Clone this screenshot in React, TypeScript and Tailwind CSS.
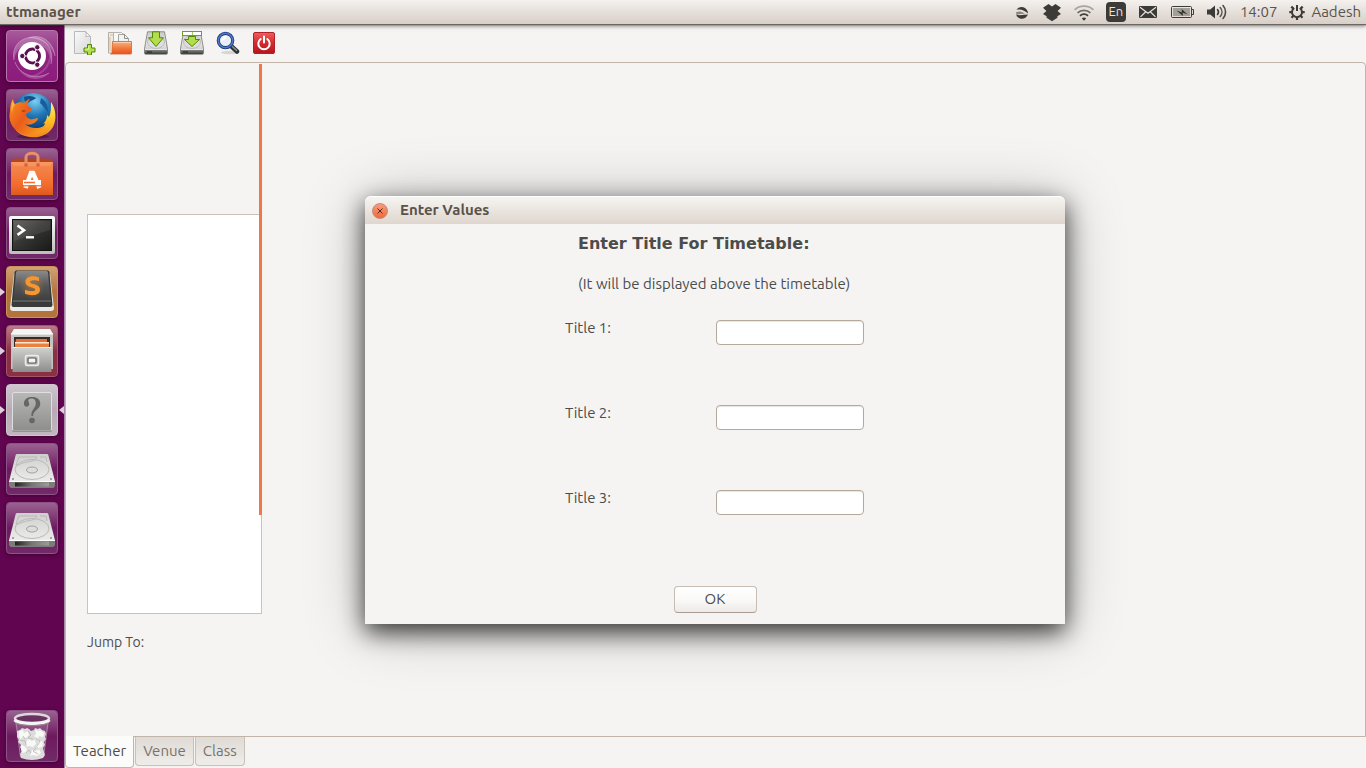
import { useState, type ReactNode } from "react";

/* ---------- top panel indicators ---------- */

const SyncIcon = () => (
  <svg width="16" height="20" viewBox="0 0 16 20">
    <path d="M2.500 8C4 5 8 4 11 6c2 1.500 3 3.500 3 5.500C11 8.500 6 6.500 2.500 8z" fill="#3c3b37" />
    <path d="M2 10.500c3-2 7-1 9 1.500-2-.6-6 .8-8.500.5z" fill="#8a867f" />
    <path d="M2.200 12.500C6 14 10 12.500 14 12.500 12.500 16 9 17.500 6 16.500c-2-.7-3.400-2-3.800-4z" fill="#3c3b37" />
  </svg>
);

const DropboxIcon = () => (
  <svg width="20" height="20" viewBox="0 0 20 20" fill="#3c3b37">
    <path d="M6.500 2 10 4.600 13.500 2 19 5.800 15.600 8.900 19 12l-3.600 2.200v1.600L10 19.200 4.600 15.800v-1.600L1 12l3.400-3.100L1 5.800z" />
  </svg>
);

const WifiIcon = () => (
  <svg width="20" height="20" viewBox="0 0 20 20" fill="none" strokeWidth="1.800">
    <path d="M.6 7.800C5.500 2.800 14.500 2.800 19.400 7.800" stroke="#a8a49e" />
    <path d="M3.600 10.900C7 7.400 13 7.400 16.400 10.900" stroke="#6f6c67" />
    <path d="M6 13.800C8.200 11.600 11.800 11.600 14 13.800" stroke="#3c3b37" />
    <path d="M7.800 16.600a3.200 3.200 0 0 1 4.400 0L10 18.800z" fill="#3c3b37" />
  </svg>
);

const MailIcon = () => (
  <svg width="20" height="20" viewBox="0 0 20 20">
    <rect x="1" y="4" width="18" height="12" rx="1" fill="#3c3b37" />
    <path
      d="m2 5.200 8 6 8-6M2.500 14.800l5-4.800M17.500 14.800l-5-4.800"
      fill="none"
      stroke="#ece7e1"
      strokeWidth="1.100"
    />
  </svg>
);

const BatteryIcon = () => (
  <svg width="24" height="20" viewBox="0 0 24 20">
    <rect x="1.500" y="4.500" width="20" height="11" rx="1" fill="none" stroke="#3c3b37" />
    <path d="M22 7.500h1.500v5H22" fill="none" stroke="#3c3b37" />
    <rect x="3" y="6" width="17" height="8" fill="#a29e99" />
    <path d="M6.500 8.500 12 10.500l-.4-3.500 6 5.500-5-2 .4 3.500z" fill="#2f2e2b" />
  </svg>
);

const VolumeIcon = () => (
  <svg width="22" height="20" viewBox="0 0 22 20">
    <path d="M1 7.500h3.200L9 3.500v13l-4.800-4H1z" fill="#3c3b37" />
    <g fill="none" strokeWidth="1.600" strokeLinecap="round">
      <path d="M11.500 7.500c1.200 1.500 1.200 3.500 0 5" stroke="#3c3b37" />
      <path d="M14.200 5.500c2.300 2.600 2.300 6.400 0 9" stroke="#5b5955" />
      <path d="M17 3.500c3.400 3.700 3.400 9.300 0 13" stroke="#4b4945" />
    </g>
  </svg>
);

const SessionIcon = () => (
  <svg width="16" height="20" viewBox="0 0 16 20" fill="none" stroke="#3c3b37">
    <path d="M5.200 6A5 5 0 1 0 10.800 6" strokeWidth="2" />
    <path d="M8 3v6" strokeWidth="2" />
    <path
      d="M.3 10.200h2.400M13.300 10.200h2.400M8 15.200v2.700M2.500 15.700l1.900-1.900M13.500 15.700l-1.900-1.900M2.300 4.600l1.900 1.900M13.700 4.600l-1.900 1.900"
      strokeWidth="2.200"
    />
  </svg>
);

/* ---------- toolbar icons ---------- */

const NewIcon = () => (
  <svg width="24" height="24" viewBox="0 0 24 24">
    <defs>
      <linearGradient id="paper" x2="1" y2="1">
        <stop stopColor="#fafafa" />
        <stop offset="1" stopColor="#d6d6d6" />
      </linearGradient>
    </defs>
    <path d="M2.500.5h11l5 5v17h-16z" fill="url(#paper)" stroke="#b9b9b7" />
    <path d="M13.500.5c1 2 .8 3.800.2 5.200 2-.6 3.600-.6 4.800 0z" fill="#fff" stroke="#a9a9a7" strokeWidth=".8" />
    <path d="M15.500 13.500h4v3.500h3.500v4h-3.500v3h-4v-3H12v-4h3.500z" fill="#b5dc4c" stroke="#4e8a06" />
    <path d="M16.800 15v3.200H13.300" fill="none" stroke="#e5f7ab" />
  </svg>
);

const OpenIcon = () => (
  <svg width="24" height="24" viewBox="0 0 24 24">
    <defs>
      <linearGradient id="folder" y2="1" x2="0">
        <stop stopColor="#f9b583" />
        <stop offset=".5" stopColor="#f37d42" />
        <stop offset="1" stopColor="#e8521c" />
      </linearGradient>
    </defs>
    <path d="M.5 22V1.500h6l1.500 1.500h8v19z" fill="#ececea" stroke="#b2b0ad" />
    <path d="M2 4h4M2 20V6" stroke="#efb37e" />
    <path d="M5.500 20V1.500h8l4 4V20z" fill="#f8f8f7" stroke="#b5b3b0" />
    <path d="M10.500 18V3.500h6l4 4V18z" fill="#f3f3f2" stroke="#a5a3a0" />
    <path d="M16.500 3v4.500h4" fill="none" stroke="#8f8d8a" />
    <path
      d="M4.500 10.500h19v11.500a1 1 0 0 1-1 1H2.500a1.500 1.500 0 0 0 1.500-1.500z"
      fill="url(#folder)"
      stroke="#d4622b"
      strokeWidth=".8"
    />
    <path d="M5 11.500h18" stroke="#fbd0b1" />
  </svg>
);

const SaveIcon = ({ boxed = false }: { boxed?: boolean }) => (
  <svg width="24" height="24" viewBox="0 0 24 24">
    <defs>
      <linearGradient id="disk" x2="0" y2="1">
        <stop stopColor="#c9c9c9" />
        <stop offset=".5" stopColor="#e8e8e8" />
        <stop offset="1" stopColor="#bfbfbf" />
      </linearGradient>
      <linearGradient id="diskbase" x2="0" y2="1">
        <stop stopColor="#8b8d8a" />
        <stop offset="1" stopColor="#3a3c3a" />
      </linearGradient>
    </defs>
    <path d="M3.500.8h17l3 17v4.500a1 1 0 0 1-1 1h-21a1 1 0 0 1-1-1v-4.500z" fill="url(#disk)" stroke="#8c8e8b" />
    <ellipse cx="12" cy="11" rx="8.500" ry="6.500" fill="#dedede" stroke="#bcbcbc" />
    <path d="M.8 18.500h22.400v3.800a.8.8 0 0 1-.8.800H1.600a.8.8 0 0 1-.8-.8z" fill="url(#diskbase)" />
    <path d="M1 18.500h22" stroke="#e9e9e9" />
    <path d="M3 21h5" stroke="#222" />
    {boxed ? (
      <>
        <rect x="2.500" y=".5" width="19" height="4" fill="#fff" stroke="#6ca21b" />
        <path d="M12.500 1v3" stroke="#a4c96b" />
        <path d="M8.500 5.500h7v3h4L12 15.500 4.500 8.500h4z" fill="#b5dc4c" stroke="#4e8a06" />
      </>
    ) : (
      <path d="M8.500.8h7v6h4L12 15.500 4.500 6.800h4z" fill="#b5dc4c" stroke="#4e8a06" />
    )}
  </svg>
);

const FindIcon = () => (
  <svg width="24" height="24" viewBox="0 0 24 24">
    <ellipse cx="14" cy="21.500" rx="9" ry="1.800" fill="#000" opacity=".12" />
    <path d="m14.500 14.500 6.500 6" stroke="#2e3436" strokeWidth="4.500" strokeLinecap="round" />
    <path d="m15.500 14.800 5 4.600" stroke="#888a85" strokeWidth="1.500" strokeLinecap="round" />
    <circle cx="9.500" cy="9.500" r="7.200" fill="#e9eef6" stroke="#1d3b80" strokeWidth="3.200" />
    <circle cx="9.500" cy="9.500" r="7.200" fill="none" stroke="#5277c3" strokeWidth="1.500" />
    <path d="M5.500 10c0-3 2-5 5.500-5-1 3-3 4-5.500 5z" fill="#fff" />
  </svg>
);

const QuitIcon = () => (
  <svg width="24" height="24" viewBox="0 0 24 24">
    <defs>
      <linearGradient id="quit" x2="0" y2="1">
        <stop stopColor="#ec5f5f" />
        <stop offset=".5" stopColor="#d52a2e" />
        <stop offset="1" stopColor="#b3151f" />
      </linearGradient>
    </defs>
    <rect x="1.500" y="1.500" width="21" height="21" rx="1.500" fill="url(#quit)" stroke="#b3202a" />
    <path
      d="M8.700 8a5.700 5.700 0 1 0 6.600 0M12 5.500v6"
      fill="none"
      stroke="#fff"
      strokeWidth="2"
      strokeLinecap="round"
    />
  </svg>
);

/* ---------- launcher icons ---------- */

const UbuntuIcon = () => (
  <svg width="52" height="52" viewBox="0 0 52 52">
    <g fill="#fff">
      <path d="M8 30C5 14 18 5 31 8c11 3 17 13 14 26 0-13-8-20-18-21-10-1-17 6-19 17z" opacity=".22" />
      <path d="M22 8c14-5 25 4 27 18-3-9-12-18-27-18z" opacity=".22" />
      <path d="M9 32c5 14 22 18 34 11-8 10-28 8-34-11z" opacity=".2" />
      <path d="M44 20c4 16-8 28-24 27 14-2 24-10 24-27z" opacity=".16" />
    </g>
    <g fill="none" stroke="#efd0ea" strokeWidth=".7" opacity=".6">
      <path d="M8 30C5 14 18 5 31 8c11 3 17 13 14 26" />
      <path d="M22 8c14-5 25 4 27 18" />
      <path d="M9 32c5 14 22 18 34 11" />
    </g>
    <circle cx="26" cy="26" r="14" fill="#fff" />
    <circle cx="26.500" cy="26" r="7" fill="none" stroke="#5b1150" strokeWidth="3" />
    <path d="M26.500 26 16 26M26.500 26l5.500 9.500M26.500 26 32 16.500" stroke="#fff" strokeWidth="1" />
    <g fill="#5b1150" stroke="#fff" strokeWidth="1">
      <circle cx="16.300" cy="26" r="2.700" />
      <circle cx="31.300" cy="17.300" r="2.700" />
      <circle cx="31.300" cy="34.700" r="2.700" />
    </g>
    <circle cx="26.500" cy="26" r="5.200" fill="#fff" />
  </svg>
);

const FirefoxIcon = () => (
  <svg width="52" height="52" viewBox="0 0 52 52">
    <defs>
      <radialGradient id="globe" cx=".55" cy=".2" r=".8">
        <stop stopColor="#7fd0f0" />
        <stop offset=".45" stopColor="#2179b8" />
        <stop offset="1" stopColor="#0b2c62" />
      </radialGradient>
      <linearGradient id="fox" x2="1" y2=".7">
        <stop stopColor="#f7941e" />
        <stop offset=".5" stopColor="#ea5b1b" />
        <stop offset="1" stopColor="#f79a1d" />
      </linearGradient>
      <linearGradient id="tail" x2="0" y2="1">
        <stop stopColor="#fff27a" />
        <stop offset=".5" stopColor="#fcc326" />
        <stop offset="1" stopColor="#f2841f" />
      </linearGradient>
    </defs>
    <ellipse cx="27" cy="47.500" rx="16" ry="2" fill="#000" opacity=".3" />
    <circle cx="27" cy="24" r="20" fill="url(#globe)" />
    <path d="M18 8c5-2 9-1 12 1-2 2-5 2-8 5-2 1-4-2-4-6z" fill="#164f8c" />
    <path d="M35 9c6 4 7 8 7 14-3-2-5-7-8-9z" fill="#195d9e" />
    <path
      d="M45 13c5 7 6 17 2 25-6 10-18 12-28 9-4-1-8-4-10-7 9 4 20 4 27-2 1 0 3-2 3-4l-2 1c4-4 4-7 4-9l2 2c2-4 2-9 2-15z"
      fill="url(#tail)"
    />
    <path
      d="M7 10c0 2 1 4 2 5 3-2 7-2 9-1 2-2 4-4 6-4-2 3-3 5-3 7 3 1 5 1 5 3-1 3-5 3-6 6 0 2 2 3 4 4 3 1 5-1 8-1-1 5-8 8-13 6 5 5 13 5 20 2-4 8-16 12-25 7C5 39 2 30 4 22c0-5 1-9 3-12z"
      fill="url(#fox)"
    />
    <path d="M15 22c2-1 4-1 5 0-2 1-3 1-5 0z" fill="#a6330e" />
    <path d="M7 10c0 3 1 5 2 6-2 2-3 5-3 9-1-5-1-11 1-15z" fill="#fbb141" />
  </svg>
);

const SoftwareIcon = () => (
  <svg width="52" height="52" viewBox="0 0 52 52">
    <defs>
      <linearGradient id="bag" x2="0" y2="1">
        <stop stopColor="#f58a52" />
        <stop offset=".7" stopColor="#f26c2c" />
        <stop offset="1" stopColor="#dc5a1e" />
      </linearGradient>
    </defs>
    <path d="M8 10.500h36l3 3.500H5z" fill="#b8451a" />
    <path d="M5 14h42v33H5z" fill="url(#bag)" />
    <path d="M5 14h42l-3 4H8z" fill="#fff" opacity=".12" />
    <path d="M20 17V9c0-5 12-5 12 0v8" fill="none" stroke="#e99069" strokeWidth="3" />
    <circle cx="20" cy="17" r="1.800" fill="#d9632f" />
    <circle cx="32" cy="17" r="1.800" fill="#d9632f" />
    <g fill="none" stroke="#fff">
      <path d="M19.500 40 25 25h2l6.500 15" strokeWidth="4.500" />
      <path d="M17 34.500h18" strokeWidth="5" />
      <path d="M18 34.500h11" stroke="#f26c2c" strokeWidth="1.500" />
    </g>
    <path d="M16 37.800h20" stroke="#f26c2c" strokeWidth="1.200" />
  </svg>
);

const TerminalIcon = () => (
  <svg width="52" height="52" viewBox="0 0 52 52">
    <defs>
      <linearGradient id="term" x2="1" y2="1">
        <stop stopColor="#5b5b59" />
        <stop offset=".5" stopColor="#333331" />
        <stop offset="1" stopColor="#191917" />
      </linearGradient>
      <linearGradient id="bezel" x2="0" y2="1">
        <stop stopColor="#fdfdfd" />
        <stop offset="1" stopColor="#bdbdbb" />
      </linearGradient>
    </defs>
    <rect x="3" y="9" width="46" height="38" rx="2" fill="url(#bezel)" />
    <rect x="6.500" y="12.500" width="39" height="31" fill="url(#term)" stroke="#111" />
    <path d="M8 14h36v9L8 34z" fill="#fff" opacity=".08" />
    <path d="m11.500 18.500 6.500 4.700-6.500 4.700" fill="none" stroke="#fff" strokeWidth="2.600" />
    <path d="M20 30.300h8" stroke="#fff" strokeWidth="2.400" />
  </svg>
);

const SublimeIcon = () => (
  <svg width="52" height="52" viewBox="0 0 52 52">
    <defs>
      <linearGradient id="key" x2="0" y2="1">
        <stop stopColor="#8a8a8a" />
        <stop offset=".5" stopColor="#565656" />
        <stop offset="1" stopColor="#3f3f3f" />
      </linearGradient>
      <radialGradient id="glow">
        <stop stopColor="#f9a13c" stopOpacity=".35" />
        <stop offset="1" stopColor="#f9a13c" stopOpacity="0" />
      </radialGradient>
    </defs>
    <path d="M8 8h36l4 34c0 2-1 3-3 3H7c-2 0-3-1-3-3z" fill="#e9e9e7" />
    <path d="M6 40h40" stroke="#bdbdbb" />
    <path d="M8.500 7c0-2 1-2.500 3-2.500h29c2 0 3 .5 3 2.500l3 32c0 1-1 2-2 2h-37c-1 0-2-1-2-2z" fill="#3a3a3a" />
    <path d="M10 6.500c0-1 1-1.500 2-1.500h28c1 0 2 .5 2 1.500L44.500 34h-37z" fill="url(#key)" />
    <path d="M7 35h38" stroke="#7a7a7a" />
    <circle cx="26" cy="20" r="13" fill="url(#glow)" />
    <path
      d="M33 11.500v3.800c-3-1.300-8.500-1.600-9 .7-.4 2.500 10.500 1.500 10 8-.5 6.200-9.500 6-15 3.700v-4c4 1.600 10 2 10.300 0 .4-2.900-10.300-1.700-9.900-8 .4-6.200 8.600-6.200 13.600-4.200z"
      fill="#f7952f"
    />
  </svg>
);

const FilesIcon = () => (
  <svg width="52" height="52" viewBox="0 0 52 52">
    <defs>
      <linearGradient id="drawer" x2="0" y2="1">
        <stop stopColor="#d2d2d0" />
        <stop offset="1" stopColor="#8d8d8b" />
      </linearGradient>
    </defs>
    <path d="M8 4h36l3 5v35H5V9z" fill="#c4c4c2" />
    <path d="M8 4h36l3 5H5z" fill="#f4f4f3" />
    <path d="M5 9h42" stroke="#fff" />
    <rect x="8" y="12" width="36" height="11" fill="#3c2a22" />
    <path d="M10 14h31v7H9z" fill="#e66e35" />
    <path d="M9 17h34v5H9z" fill="#fbe6d2" />
    <path d="M9 18.500h34V22H9z" fill="#e9813f" />
    <path d="M6.500 22h39v25h-39z" fill="url(#drawer)" />
    <path d="M6.500 22.500h39" stroke="#efefed" />
    <rect x="19.500" y="30.500" width="13" height="10" rx="1.500" fill="#bdbdbb" stroke="#ededeb" strokeWidth="1.500" />
    <rect x="22" y="33" width="8" height="5" rx="1" fill="#f5f5f4" stroke="#555" strokeWidth="1.200" />
  </svg>
);

const UnknownIcon = () => (
  <svg width="52" height="52" viewBox="0 0 52 52">
    <defs>
      <linearGradient id="unknown" x2="0" y2="1">
        <stop stopColor="#b8b8b6" />
        <stop offset="1" stopColor="#8e8e8c" />
      </linearGradient>
    </defs>
    <rect x="6.500" y="8.500" width="39" height="38" rx="1.500" fill="url(#unknown)" stroke="#e0dfe0" />
    <path d="M6.500 47h39" stroke="#6c6c6a" />
    <path
      d="M18 20.500C17.500 15.500 21 13 26 13c5.200 0 8.300 2.600 8.300 6.600 0 6-7 6.400-7.300 12.400h-1.600c-.4-6.500 4.400-7.500 4.400-12.400 0-3.200-1.500-5-4.300-5-2.300 0-3.500 1.200-3.200 2.400.3 1.200.9 1.700.9 3 0 3.300-4.800 3.600-5.200.5z"
      fill="#666664"
    />
    <circle cx="26" cy="36.500" r="2.800" fill="#666664" />
  </svg>
);

const DriveIcon = () => (
  <svg width="52" height="52" viewBox="0 0 52 52">
    <defs>
      <linearGradient id="drive" x2="0" y2="1">
        <stop stopColor="#cfcfcd" />
        <stop offset="1" stopColor="#ececea" />
      </linearGradient>
      <linearGradient id="drivefront" x2="1">
        <stop stopColor="#222" />
        <stop offset=".5" stopColor="#777775" />
        <stop offset="1" stopColor="#9c9c9a" />
      </linearGradient>
    </defs>
    <path d="M3 38h46v5l-1.500 2h-43L3 43z" fill="#7c7c7a" />
    <path d="M9 39.500h34v4H9z" fill="url(#drivefront)" />
    <path d="M11 11h30q1 0 1.300 1L49 38.500H3L9.700 12q.3-1 1.300-1z" fill="url(#drive)" />
    <path d="M3 38.500h46" stroke="#fff" />
    <g fill="none" stroke="#b9b9b7">
      <ellipse cx="26" cy="26.500" rx="17" ry="10" />
      <ellipse cx="26" cy="27" rx="5.500" ry="3" fill="#dcdcda" stroke="#a2a2a0" />
      <path d="M13 14h18c-2 5-8 4-14 6-4 1-5 3-7 2z" />
      <path d="M34 14h6l1 5" />
    </g>
    <g fill="#8b8b89">
      <circle cx="7" cy="36" r="1" />
      <circle cx="45" cy="36" r="1" />
    </g>
  </svg>
);

const TrashIcon = () => (
  <svg width="52" height="52" viewBox="0 0 52 52">
    <path d="m9 11 5 36q12 3 24 0l5-36z" fill="#fff" opacity=".13" />
    <path d="m10 12 4.500 35M42 12l-4.500 35" stroke="#cfb3ca" opacity=".5" />
    <path
      d="m11 21 3-1 2-2 3 1 2-1 2 1 2 2 3-1 1-2 3 1 2-1 2 2 3 1 1 3-1 3 1 2-2 3 1 3-2 3 1 4 1 3-2 3q-11 4-22 0l-1-4 2-3-2-4 1-2-3-3 1-2-2-3z"
      fill="#dcdcda"
    />
    <path
      d="m13 21 4-1 1 3 4-2 1 4-3 3-4-1-1 3-2-4zM29 20l4 1 1-1 4 3-1 4-4-1-1 3-4-3 2-2zM21 30l3-1 1 2 4-1 1 4-3 3-4-1-2 1-1-4zM32 32l4-1 1 3-1 3-4 1zM15 35l3 1 3 3-1 3-4 1-1-4zM26 40l4 1 3-2 2 4-4 3-4-1-3 1z"
      fill="#f8f8f7"
    />
    <path
      d="m22 21 3 4-3 3 5 1M14 30l5 1 1 4M30 28l4 3-2 4M30 38l-3 3 5 3M20 43l3-3 2 3M17 26l2 3"
      fill="none"
      stroke="#b5b5b3"
      strokeWidth=".8"
    />
    <ellipse cx="26" cy="8.500" rx="17" ry="4.500" fill="#6a3163" stroke="#d9d9d7" strokeWidth="2.500" />
    <path d="M8.500 10c4 4.500 31 4.500 35 0" fill="none" stroke="#f4f4f2" strokeWidth="3" />
    <path d="M10 13c6 3.500 26 3.500 32 0" fill="none" stroke="#8d8d8b" />
  </svg>
);

/* ---------- launcher ---------- */

type Tile = { name: string; icon: ReactNode; tint: string; running?: boolean; focused?: boolean };

const PLAIN = "bg-linear-to-b from-[#9a6192] via-[#6d195f] to-[#722a68] border-[#8d5286]";

const TILES: Tile[] = [
  {
    name: "Search",
    icon: <UbuntuIcon />,
    tint: "bg-linear-to-b from-[#a85a9c] via-[#8f2480] to-[#8d1b7d] border-[#b876ae]",
  },
  { name: "Firefox", icon: <FirefoxIcon />, tint: PLAIN },
  { name: "Software Centre", icon: <SoftwareIcon />, tint: PLAIN },
  { name: "Terminal", icon: <TerminalIcon />, tint: PLAIN },
  {
    name: "Sublime Text",
    icon: <SublimeIcon />,
    tint: "bg-linear-to-b from-[#cfa274] via-[#b3743b] to-[#b3743b] border-[#c8935d]",
    running: true,
  },
  {
    name: "Files",
    icon: <FilesIcon />,
    tint: "bg-linear-to-b from-[#b87c88] via-[#8b2f45] to-[#8b2f45] border-[#a35766]",
    running: true,
  },
  {
    name: "ttmanager",
    icon: <UnknownIcon />,
    tint: "bg-linear-to-b from-[#d0c6ce] via-[#b7aab5] to-[#c2b7c0] border-[#cfc6cd]",
    running: true,
    focused: true,
  },
  { name: "Volume 1", icon: <DriveIcon />, tint: PLAIN },
  { name: "Volume 2", icon: <DriveIcon />, tint: PLAIN },
];

function LauncherTile({ tile }: { tile: Tile }) {
  return (
    <div className="relative flex justify-center">
      {tile.running && (
        <svg className="absolute left-0 top-5" width="5" height="12" viewBox="0 0 5 12">
          <path d="M0 2v8l5-4z" fill="#dcd0da" />
        </svg>
      )}
      <button
        type="button"
        aria-label={tile.name}
        className={`flex size-[52px] items-center justify-center rounded border shadow-[0_1px_4px_rgba(0,0,0,0.4)] ${tile.tint}`}
      >
        <span className="shrink-0">{tile.icon}</span>
      </button>
      {tile.focused && (
        <svg className="absolute right-0 top-5" width="5" height="12" viewBox="0 0 5 12">
          <path d="M5 2v8L0 6z" fill="#dcd0da" />
        </svg>
      )}
    </div>
  );
}

/* ---------- application ---------- */

const TOOLS = [
  { name: "New", icon: <NewIcon /> },
  { name: "Open", icon: <OpenIcon /> },
  { name: "Save", icon: <SaveIcon /> },
  { name: "Save as", icon: <SaveIcon boxed /> },
  { name: "Find", icon: <FindIcon /> },
  { name: "Quit", icon: <QuitIcon /> },
];

const TABS = ["Teacher", "Venue", "Class"];

const FIELDS = ["Title 1:", "Title 2:", "Title 3:"];

function TitleDialog({ onClose }: { onClose: () => void }) {
  return (
    <div className="absolute inset-0 flex items-start justify-center pr-px pt-[172px]">
      <section
        role="dialog"
        aria-labelledby="dialog-title"
        className="w-[700px] max-w-full rounded-t-md bg-[#f5f4f2] shadow-[0_8px_24px_rgba(0,0,0,0.75),0_4px_60px_rgba(0,0,0,0.25)]"
      >
        <header className="flex h-7 items-center gap-3 rounded-t-md border-t border-white bg-linear-to-b from-[#f6f4f1] to-[#dfd6ce] pl-[7px]">
          <button
            type="button"
            aria-label="Close"
            onClick={onClose}
            className="flex size-4 items-center justify-center rounded-full border border-[#c58a74] bg-linear-to-b from-[#f79b7c] to-[#ee6a3c]"
          >
            <svg width="6" height="6" viewBox="0 0 6 6">
              <path d="m.5.5 5 5M5.500.5l-5 5" stroke="#5a2a18" />
            </svg>
          </button>
          <h1 id="dialog-title" className="font-bold text-[#5a534b]">
            Enter Values
          </h1>
        </header>
        <form
          className="flex flex-col pb-[11px] pt-2"
          onSubmit={(e) => {
            e.preventDefault();
            onClose();
          }}
        >
          <div className="pl-[213px]">
            <h2 className="font-['DejaVu_Sans','Liberation_Sans',sans-serif] text-base/6 font-bold">
              Enter Title For Timetable:
            </h2>
            <p className="mt-4 leading-6">(It will be displayed above the timetable)</p>
          </div>
          <div className="mt-6 pl-[200px]">
            {FIELDS.map((label, i) => (
              <div key={label} className="flex h-[85px] items-start">
                <label htmlFor={`title-${i + 1}`} className="w-[151px] leading-4">
                  {label}
                </label>
                <input
                  id={`title-${i + 1}`}
                  type="text"
                  className="h-[25px] w-[148px] rounded border border-[#b5a99b] bg-white px-2 shadow-[inset_0_1px_1px_rgba(0,0,0,0.1)] outline-none"
                />
              </div>
            ))}
          </div>
          <button
            type="submit"
            className="mt-[11px] h-[27px] w-[83px] self-center rounded border border-[#c6bcb2] border-b-[#a99d91] bg-linear-to-b from-white via-[#fbfaf9] to-[#edeae8]"
          >
            OK
          </button>
        </form>
      </section>
    </div>
  );
}

export default function App() {
  const [tab, setTab] = useState("Teacher");
  const [asking, setAsking] = useState(true);

  return (
    <div className="flex min-h-screen flex-col bg-[#f5f4f2] font-['Ubuntu','Noto_Sans','Open_Sans',sans-serif] text-[15px] text-[#4c4c4c]">
      <header className="z-10 flex h-6 items-center justify-between bg-linear-to-b from-[#f4f1ee] to-[#d8cfc7] pl-1.5 pr-[5px] text-[#5a534b] shadow-[0_0_1px_1px_#6b6863,0_2px_4px_rgba(0,0,0,0.5)]">
        <span className="font-bold">ttmanager</span>
        <div className="flex items-center gap-3">
          <SyncIcon />
          <DropboxIcon />
          <WifiIcon />
          <span className="flex size-5 items-center justify-center rounded-sm bg-[#3c3b37] text-[13px] text-[#eae5df]">
            En
          </span>
          <MailIcon />
          <BatteryIcon />
          <VolumeIcon />
          <time>14:07</time>
          <span className="flex items-center gap-1.5">
            <SessionIcon />
            Aadesh
          </span>
        </div>
      </header>

      <div className="flex flex-1">
        <nav
          aria-label="Launcher"
          className="flex w-[65px] shrink-0 flex-col gap-[7px] border-r border-[#a78aa3] bg-[#620550] py-1.5"
        >
          {TILES.map((tile) => (
            <LauncherTile key={tile.name} tile={tile} />
          ))}
          <div className="mt-auto">
            <LauncherTile tile={{ name: "Rubbish Bin", icon: <TrashIcon />, tint: PLAIN }} />
          </div>
        </nav>

        <main className="relative flex min-w-0 flex-1 flex-col">
          <div role="toolbar" className="flex h-[38px] items-center gap-3 pl-[7px]">
            {TOOLS.map((tool) => (
              <button key={tool.name} type="button" aria-label={tool.name} className="size-6">
                {tool.icon}
              </button>
            ))}
          </div>

          <div className="relative flex flex-1 flex-col rounded-t-sm border border-[#c0b5a8] pl-[21px] pt-[151px]">
            <div className="absolute left-[193px] top-px h-[451px] w-[3px] bg-[#f07746]" />
            <div role="listbox" aria-label="Entries" className="h-[400px] w-[175px] border border-[#cbc3b9] bg-white" />
            <p className="mt-5 text-sm/4">Jump To:</p>
          </div>

          <div role="tablist" className="flex h-[31px] items-start gap-px">
            {TABS.map((name) => (
              <button
                key={name}
                type="button"
                role="tab"
                aria-selected={tab === name}
                onClick={() => setTab(name)}
                className={
                  tab === name
                    ? "z-1 -mt-px h-8 rounded-b border border-t-0 border-[#c0b5a8] bg-[#fbfbfa] px-[7px]"
                    : "h-[29px] rounded-b border border-t-0 border-[#c9c0b6] bg-linear-to-b from-[#dfdad5] to-[#efedea] px-[7px] text-[#77726c]"
                }
              >
                {name}
              </button>
            ))}
          </div>

          {asking && <TitleDialog onClose={() => setAsking(false)} />}
        </main>
      </div>
    </div>
  );
}
